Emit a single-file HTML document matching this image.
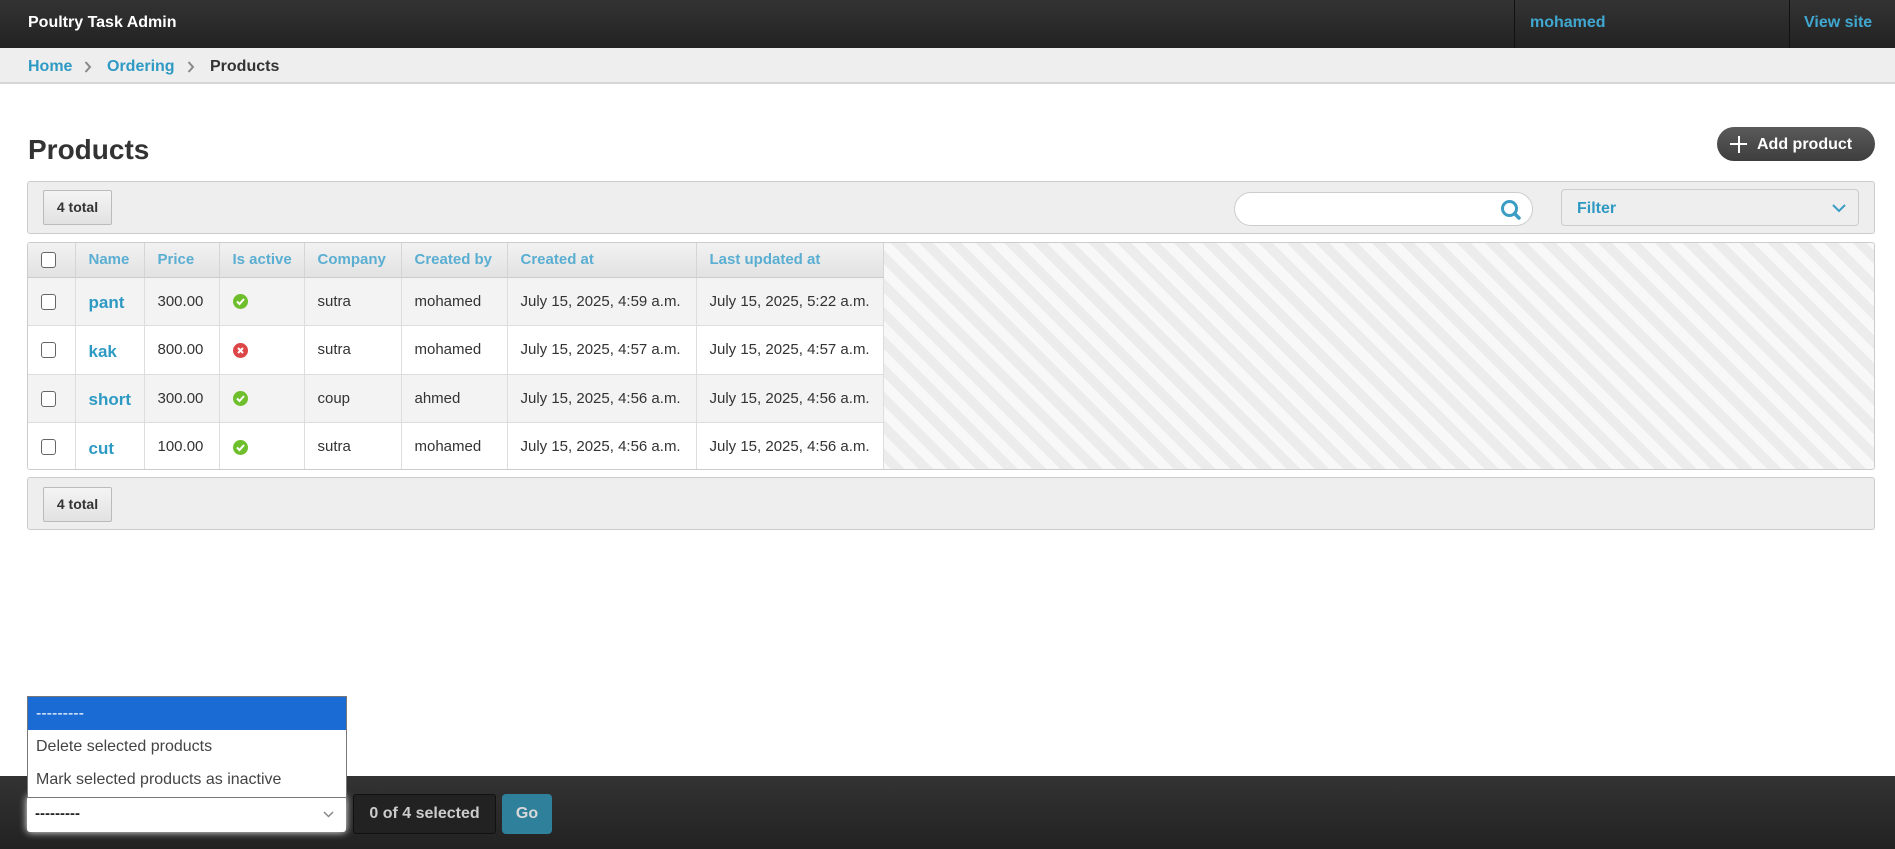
<!DOCTYPE html>
<html><head><meta charset="utf-8"><style>
*{box-sizing:border-box;margin:0;padding:0}
body{width:1895px;height:849px;overflow:hidden;background:#fff;font-family:"Liberation Sans",Arial,sans-serif;color:#333;position:relative}
.hdr{position:absolute;left:0;top:0;width:1895px;height:48px;background:linear-gradient(#333,#222);}
.hdr .t{position:absolute;left:28px;top:14px;color:#fff;font-weight:bold;font-size:16px}
.hdr .sep{position:absolute;top:0;height:48px;border-left:1px solid #111}
.hdr a{position:absolute;top:14px;color:#40a8d0;font-weight:bold;font-size:16px}
.bc{position:absolute;left:0;top:48px;width:1895px;height:36px;background:#eee;border-bottom:2px solid #d6d6d6;font-size:16px;font-weight:bold}
.bc span{position:absolute;top:10px}
.blue{color:#2e9ac4}
h1{position:absolute;left:28px;top:134px;font-size:28px;font-weight:bold;color:#333}
.add{position:absolute;left:1717px;top:127px;width:158px;height:34px;border-radius:17px;background:linear-gradient(#5a5a5a,#3e3e3e);color:#fff;font-weight:bold;font-size:16px;line-height:35px;padding-left:40px}
.add:before{content:"";position:absolute;left:13px;top:16px;width:17px;height:2px;background:#fff}
.add:after{content:"";position:absolute;left:20.5px;top:9px;width:2px;height:17px;background:#fff}
.bar{position:absolute;left:27px;width:1848px;background:#eee;border:1px solid #ccc;border-radius:3px}
.tot{position:absolute;left:15px;width:69px;height:35px;border:1px solid #bbb;border-radius:2px;background:linear-gradient(#f4f4f4,#e2e2e2);font-weight:bold;font-size:14px;line-height:33px;text-align:center}
.search{position:absolute;left:1234px;top:192px;width:299px;height:34px;border:1px solid #ccc;border-radius:17px;background:#fff}
.filter{position:absolute;left:1561px;top:189px;width:298px;height:37px;border:1px solid #ccc;border-radius:4px;background:#eee;color:#2e9ac4;font-weight:bold;font-size:16px;line-height:38px;padding-left:15px}
.res{position:absolute;left:27px;top:242px;width:1848px;height:228px;border:1px solid #ccc;border-radius:3px;background:repeating-linear-gradient(45deg,#f8f8f8 0 10px,#ececec 10px 20px);overflow:hidden}
table{position:absolute;left:0;top:0;border-collapse:collapse;font-size:15px;background:#fff;table-layout:fixed;width:855px}
th{height:34px;background:linear-gradient(#f2f2f2,#e2e2e2);color:#5aaed2;font-weight:bold;text-align:left;padding:0 0 0 13px;border-right:1px solid #d5d5d5;border-bottom:1px solid #ccc;white-space:nowrap;overflow:hidden}
td{height:48.5px;padding:0 0 0 13px;border-right:1px solid #ddd;border-bottom:1px solid #ddd;white-space:nowrap;color:#333;overflow:hidden}
tr.o td{background:#f3f3f3}
td.n{color:#2e9ac4;font-weight:bold;font-size:17px;padding-top:4px}
.cb{display:inline-block;width:15px;height:16px;border:1.5px solid #666;border-radius:3px;background:#fff;vertical-align:middle}
.ic{display:inline-block;width:15px;height:15px;border-radius:50%;vertical-align:middle;position:relative}
.foot{position:absolute;left:0;top:776px;width:1895px;height:73px;background:linear-gradient(#333,#222)}
.sel{position:absolute;left:27px;top:796px;width:319px;height:36px;background:#fff;border-radius:3px;box-shadow:0 0 8px #fff;font-size:15px;line-height:36px;padding-left:8px;font-weight:bold;color:#222}
.dd{position:absolute;left:27px;top:696px;width:320px;height:102px;background:#fff;border:1px solid #777;font-size:16px;color:#444}
.dd div{height:33px;line-height:33px;padding-left:8px}
.cnt{position:absolute;left:353px;top:794px;width:143px;height:40px;border:1px solid #111;border-radius:3px;background:#222;color:#ccc;font-weight:bold;font-size:16px;line-height:38px;text-align:center}
.go{position:absolute;left:502px;top:794px;width:50px;height:40px;border-radius:4px;background:#2f819b;color:#d8d8d8;font-weight:bold;font-size:16px;line-height:40px;text-align:center}
</style></head><body>
<div class="hdr"><div class="t">Poultry Task Admin</div>
<div class="sep" style="left:1514px"></div><a style="left:1530px">mohamed</a>
<div class="sep" style="left:1789px"></div><a style="left:1804px">View site</a></div>
<div class="bc"><span class="blue" style="left:28px">Home</span><svg style="position:absolute;left:84px;top:13px" width="8" height="12" viewBox="0 0 8 12"><path d="M1.5 1 L6 6 L1.5 11" fill="none" stroke="#888" stroke-width="2"/></svg><span class="blue" style="left:107px">Ordering</span><svg style="position:absolute;left:187px;top:13px" width="8" height="12" viewBox="0 0 8 12"><path d="M1.5 1 L6 6 L1.5 11" fill="none" stroke="#888" stroke-width="2"/></svg><span style="left:210px">Products</span></div>
<h1>Products</h1>
<div class="add">Add product</div>
<div class="bar" style="top:181px;height:53px"><div class="tot" style="top:8px">4 total</div></div>
<div class="search"><svg style="position:absolute;right:10px;top:6px" width="22" height="22" viewBox="0 0 22 22"><circle cx="9.5" cy="9.5" r="7" fill="none" stroke="#3b9cc4" stroke-width="3"/><path d="M14.5 14.5 L19 19" stroke="#3b9cc4" stroke-width="3.5" stroke-linecap="round"/></svg></div>
<div class="filter">Filter<svg style="position:absolute;right:12px;top:14px" width="14" height="9" viewBox="0 0 14 9"><path d="M1 1 L7 7 L13 1" fill="none" stroke="#3b9cc4" stroke-width="2"/></svg></div>
<div class="res"><table>
<colgroup><col style="width:47px"><col style="width:69px"><col style="width:75px"><col style="width:85px"><col style="width:97px"><col style="width:106px"><col style="width:189px"><col style="width:187px"></colgroup>
<tr><th><span class="cb"></span></th><th>Name</th><th>Price</th><th>Is active</th><th>Company</th><th>Created by</th><th>Created at</th><th>Last updated at</th></tr>
<tr class="o"><td><span class="cb"></span></td><td class="n">pant</td><td>300.00</td><td><span class="ic" style="background:#6fbf2c"><svg width="15" height="15"><path d="M4 7.5 L6.5 10 L11 5" fill="none" stroke="#fff" stroke-width="2"/></svg></span></td><td>sutra</td><td>mohamed</td><td>July 15, 2025, 4:59 a.m.</td><td>July 15, 2025, 5:22 a.m.</td></tr>
<tr><td><span class="cb"></span></td><td class="n">kak</td><td>800.00</td><td><span class="ic" style="background:#dd4646"><svg width="15" height="15"><path d="M5 5 L10 10 M10 5 L5 10" stroke="#fff" stroke-width="2"/></svg></span></td><td>sutra</td><td>mohamed</td><td>July 15, 2025, 4:57 a.m.</td><td>July 15, 2025, 4:57 a.m.</td></tr>
<tr class="o"><td><span class="cb"></span></td><td class="n">short</td><td>300.00</td><td><span class="ic" style="background:#6fbf2c"><svg width="15" height="15"><path d="M4 7.5 L6.5 10 L11 5" fill="none" stroke="#fff" stroke-width="2"/></svg></span></td><td>coup</td><td>ahmed</td><td>July 15, 2025, 4:56 a.m.</td><td>July 15, 2025, 4:56 a.m.</td></tr>
<tr><td><span class="cb"></span></td><td class="n">cut</td><td>100.00</td><td><span class="ic" style="background:#6fbf2c"><svg width="15" height="15"><path d="M4 7.5 L6.5 10 L11 5" fill="none" stroke="#fff" stroke-width="2"/></svg></span></td><td>sutra</td><td>mohamed</td><td>July 15, 2025, 4:56 a.m.</td><td>July 15, 2025, 4:56 a.m.</td></tr>
</table></div>
<div class="bar" style="top:477px;height:53px"><div class="tot" style="top:9px">4 total</div></div>
<div class="foot"></div>
<div class="sel">---------<svg style="position:absolute;right:12px;top:15px" width="11" height="7" viewBox="0 0 11 7"><path d="M1 1 L5.5 5.5 L10 1" fill="none" stroke="#888" stroke-width="1.5"/></svg></div>
<div class="dd"><div style="background:#1a6bd4;color:#fff">---------</div><div>Delete selected products</div><div>Mark selected products as inactive</div></div>
<div class="cnt">0 of 4 selected</div>
<div class="go">Go</div>
</body></html>
